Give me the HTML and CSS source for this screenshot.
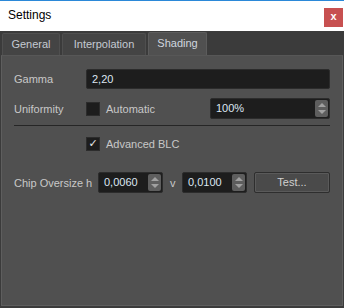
FILE: index.html
```html
<!DOCTYPE html>
<html lang="en">
<head>
    <meta charset="UTF-8">
    <title>Settings</title>
    <link rel="stylesheet" href="styles.css">
</head>
<body>
    <div class="window">
        <div class="titlebar">
            <span class="title">Settings</span>
            <div class="close">x</div>
        </div>
        <div class="tabs">
            <div class="tab t-general">General</div>
            <div class="tab t-interp">Interpolation</div>
            <div class="tab t-shading active">Shading</div>
        </div>
        <div class="pane">
            <div class="row">
                <span class="label">Gamma</span>
                <div class="field wide">2,20</div>
            </div>
            <div class="row row-uni">
                <span class="label">Uniformity</span>
                <span class="check"></span>
                <span class="check-text">Automatic</span>
                <div class="field spin uni">
                    <span>100%</span>
                    <div class="arrows"><i class="up"></i><i class="down"></i></div>
                </div>
            </div>
            <div class="sep"></div>
            <div class="row row-blc">
                <span class="label"></span>
                <span class="check on">&#10003;</span>
                <span class="check-text">Advanced BLC</span>
            </div>
            <div class="row row-chip">
                <span class="label">Chip Oversize</span>
                <span class="axis">h</span>
                <div class="field spin small">
                    <span>0,0060</span>
                    <div class="arrows"><i class="up"></i><i class="down"></i></div>
                </div>
                <span class="axis v">v</span>
                <div class="field spin small">
                    <span>0,0100</span>
                    <div class="arrows"><i class="up"></i><i class="down"></i></div>
                </div>
                <div class="button">Test...</div>
            </div>
        </div>
    </div>
</body>
</html>
```

FILE: styles.css
```css
html, body {
    margin: 0;
    padding: 0;
}
body {
    width: 344px;
    height: 308px;
    overflow: hidden;
    font-family: "Liberation Sans", Arial, sans-serif;
    font-size: 11px;
    background-color: #3b3b3b;
}
.window {
    display: flex;
    flex-direction: column;
    height: 308px;
}
.titlebar {
    display: flex;
    align-items: center;
    justify-content: space-between;
    height: 30px;
    background-color: #fff;
    border-top: 1px solid #2b88d8;
    color: #000;
}
.title {
    margin-left: 8px;
    margin-top: -2px;
    font-size: 12px;
}
.close {
    width: 19px;
    height: 19px;
    margin-right: 1px;
    margin-top: 2px;
    background-color: #c75050;
    color: #fff;
    font-weight: bold;
    font-size: 11px;
    line-height: 17px;
    text-align: center;
}
.tabs {
    display: flex;
    align-items: flex-end;
    height: 24px;
    padding-left: 2px;
    background-color: #3b3b3b;
}
.tab {
    box-sizing: border-box;
    height: 22px;
    line-height: 21px;
    margin-right: 2px;
    text-align: center;
    background-color: #444;
    border: 1px solid #4f4f4f;
    border-bottom: none;
    border-radius: 2px 2px 0 0;
    color: #c4cad2;
}
.t-general {
    width: 58px;
}
.t-interp {
    width: 84px;
}
.t-shading {
    width: 59px;
}
.tab.active {
    height: 23px;
    line-height: 20px;
    background-color: #505050;
    border-color: #5c5c5c;
    color: #cfd6df;
}
.pane {
    flex: 1;
    margin: 0 1px 2px 1px;
    padding: 12px 12px 0 12px;
    background-color: #505050;
    border: 1px solid #5e5e5e;
    border-top-color: #575757;
}
.row {
    display: flex;
    align-items: center;
    height: 21px;
    color: #c8c8c8;
    white-space: nowrap;
}
.label {
    width: 72px;
    flex: none;
}
.field {
    box-sizing: border-box;
    height: 21px;
    line-height: 19px;
    padding-left: 5px;
    background-color: #1d1d1d;
    border: 1px solid #2c2c2c;
    border-radius: 2px;
    color: #dce6f2;
}
.wide {
    flex: 1;
    height: 20px;
    line-height: 18px;
}
.spin {
    display: flex;
    justify-content: space-between;
    padding-right: 1px;
}
.spin.uni {
    width: 120px;
    margin-left: auto;
}
.spin.small {
    width: 65px;
}
.arrows {
    display: flex;
    flex-direction: column;
    justify-content: center;
    align-items: center;
    gap: 3px;
    width: 13px;
    margin: 1px 0;
    background-color: #5e5e5e;
    border-radius: 2px;
}
.arrows i {
    width: 0;
    height: 0;
    border-left: 4px solid transparent;
    border-right: 4px solid transparent;
}
.arrows .up {
    border-bottom: 4px solid #a0a0a0;
}
.arrows .down {
    border-top: 4px solid #a0a0a0;
}
.row-uni {
    margin-top: 9px;
}
.check {
    box-sizing: border-box;
    width: 14px;
    height: 14px;
    background-color: #1d1d1d;
    border: 1px solid #2c2c2c;
    color: #e8e8e8;
    font-size: 11px;
    font-weight: bold;
    line-height: 12px;
    text-align: center;
    font-family: "DejaVu Sans", sans-serif;
}
.check-text {
    margin-left: 6px;
}
.sep {
    height: 1px;
    margin: 6px 0 0 0;
    background-color: #262626;
}
.row-blc {
    margin-top: 11px;
    height: 14px;
}
.row-chip {
    margin-top: 21px;
}
.axis {
    width: 12px;
    flex: none;
}
.axis.v {
    width: 12px;
    margin-left: 7px;
}
.button {
    box-sizing: border-box;
    flex: 1;
    height: 21px;
    line-height: 19px;
    margin-left: 7px;
    text-align: center;
    background-color: #4a4a4a;
    border: 1px solid #2e2e2e;
    border-radius: 2px;
    box-shadow: inset 0 0 0 1px #5a5a5a;
    color: #d0d0d0;
}
```
